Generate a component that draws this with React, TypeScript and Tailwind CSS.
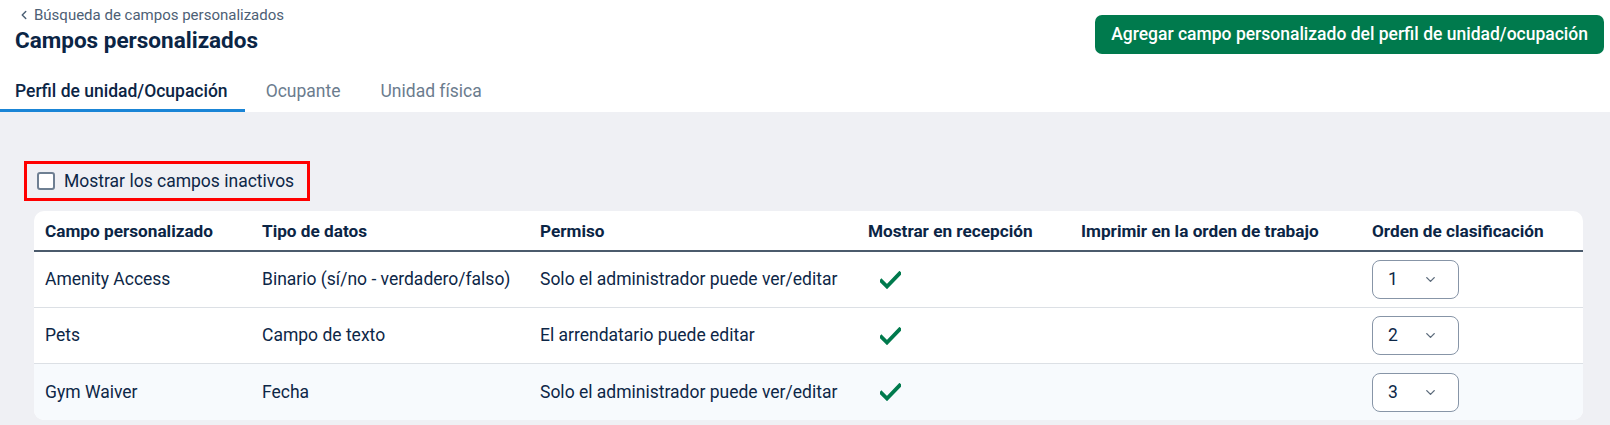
import { ChevronDown, ChevronLeft } from "lucide-react";

const rows = [
  { name: "Amenity Access", type: "Binario (sí/no - verdadero/falso)", perm: "Solo el administrador puede ver/editar", order: 1 },
  { name: "Pets", type: "Campo de texto", perm: "El arrendatario puede editar", order: 2 },
  { name: "Gym Waiver", type: "Fecha", perm: "Solo el administrador puede ver/editar", order: 3 },
];

const cols = "grid grid-cols-[217px_278px_328px_213px_291px_1fr]";

function Check() {
  return (
    <svg width="21" height="18" viewBox="0 0 21 18" className="ml-[12px]">
      <path d="M1.5 10 L7 15.5 L19.5 2.5" fill="none" stroke="#007a4d" strokeWidth="3.8" strokeLinecap="square" />
    </svg>
  );
}

export default function App() {
  return (
    <div className="min-h-[425px] bg-[#eff0f4] font-['Roboto',sans-serif] text-[#0d2747]">
      <div className="bg-white">
        <div className="flex items-start justify-between pr-[6px]">
          <div>
            <div className="flex h-[29px] items-center pl-[17px] pt-[1px] text-[15px] text-[#4d6075]">
              <ChevronLeft className="h-[14px] w-[14px]" strokeWidth={2.5} />
              <span className="ml-[3px]">Búsqueda de campos personalizados</span>
            </div>
            <h1 className="pl-[15px] text-[22.5px] font-bold leading-[22px] text-[#0b2545]">Campos personalizados</h1>
          </div>
          <button className="mt-[15px] h-[39px] rounded-[7px] bg-[#007a4d] px-[16px] text-[17.5px] font-medium text-white">
            Agregar campo personalizado del perfil de unidad/ocupación
          </button>
        </div>
        <div className="mt-[17px] flex h-[41px] items-stretch text-[17.5px]">
          <div className="flex items-center border-b-[3px] border-[#1a85d6] pl-[15px] pr-[17px] pt-[3px] font-medium text-[#0b2545]">
            Perfil de unidad/Ocupación
          </div>
          <div className="flex items-center pl-[21px] pr-[20px] text-[#6b7c8e]">Ocupante</div>
          <div className="flex items-center pl-[20px] text-[#6b7c8e]">Unidad física</div>
        </div>
      </div>

      <div className="pl-[24px] pt-[49px]">
        <label className="flex h-[40px] w-[286px] items-center border-[3px] border-[#ff0000] pl-[10px]">
          <span className="h-[18px] w-[18px] rounded-[3px] border-2 border-[#6e7f92] bg-white" />
          <span className="ml-[9px] text-[17.5px] text-[#0d2747]">Mostrar los campos inactivos</span>
        </label>
      </div>

      <div className="ml-[34px] mr-[27px] mt-[10px] overflow-hidden rounded-[10px] bg-white">
        <div className={`${cols} h-[41px] items-center border-b-2 border-[#4b5b6c] pt-[3px] text-[17.2px] font-bold text-[#0b2545]`}>
          <div className="pl-[11px]">Campo personalizado</div>
          <div className="pl-[11px]">Tipo de datos</div>
          <div className="pl-[11px]">Permiso</div>
          <div className="pl-[11px]">Mostrar en recepción</div>
          <div className="pl-[11px]">Imprimir en la orden de trabajo</div>
          <div className="pl-[11px]">Orden de clasificación</div>
        </div>
        {rows.map((r, i) => (
          <div
            key={r.name}
            className={`${cols} h-[56px] items-center text-[17.5px] ${i < rows.length - 1 ? "border-b border-[#dce0e5]" : ""} ${i === 2 ? "bg-[#f7fafd]" : ""}`}
          >
            <div className="pl-[11px]">{r.name}</div>
            <div className="pl-[11px]">{r.type}</div>
            <div className="pl-[11px]">{r.perm}</div>
            <div className="pl-[11px]">
              <Check />
            </div>
            <div />
            <div className="pl-[11px]">
              <div className="flex h-[39px] w-[87px] items-center justify-between rounded-[8px] border border-[#8795a7] bg-white pl-[15px] pr-[20px]">
                <span className="text-[17.5px] text-[#0d2747]">{r.order}</span>
                <ChevronDown className="h-[15px] w-[15px] text-[#5c6b7b]" strokeWidth={2.2} />
              </div>
            </div>
          </div>
        ))}
      </div>
    </div>
  );
}
